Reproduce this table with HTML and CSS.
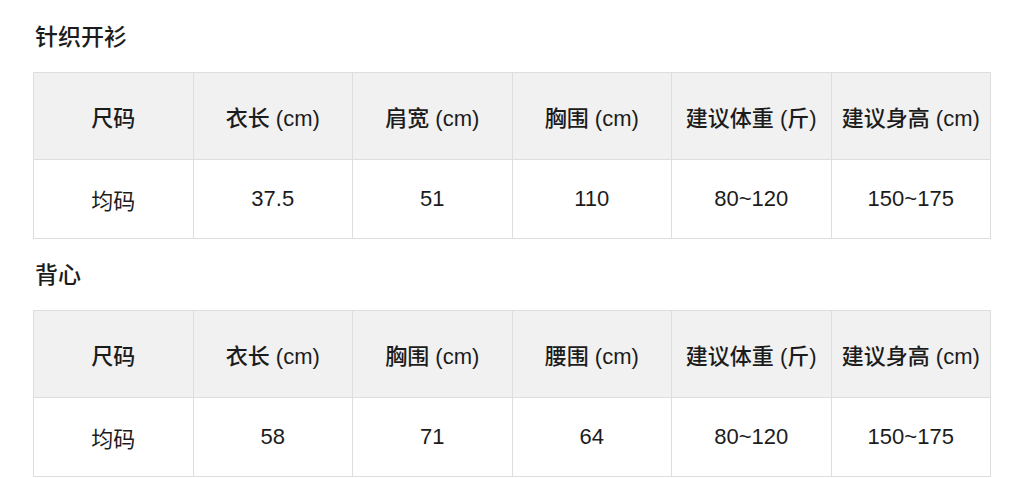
FILE: index.html
```html
<!DOCTYPE html>
<html lang="zh-CN">
<head>
<meta charset="utf-8">
<link rel="stylesheet" href="styles.css">
</head>
<body>
<div class="page">
  <section class="block">
    <h2 class="title">针织开衫</h2>
    <table class="size-table">
      <thead>
        <tr><th>尺码</th><th>衣长 (cm)</th><th>肩宽 (cm)</th><th>胸围 (cm)</th><th>建议体重 (斤)</th><th>建议身高 (cm)</th></tr>
      </thead>
      <tbody>
        <tr><td>均码</td><td>37.5</td><td>51</td><td>110</td><td>80~120</td><td>150~175</td></tr>
      </tbody>
    </table>
  </section>
  <section class="block">
    <h2 class="title">背心</h2>
    <table class="size-table">
      <thead>
        <tr><th>尺码</th><th>衣长 (cm)</th><th>胸围 (cm)</th><th>腰围 (cm)</th><th>建议体重 (斤)</th><th>建议身高 (cm)</th></tr>
      </thead>
      <tbody>
        <tr><td>均码</td><td>58</td><td>71</td><td>64</td><td>80~120</td><td>150~175</td></tr>
      </tbody>
    </table>
  </section>
</div>
</body>
</html>
```

FILE: styles.css
```css
html, body {
  margin: 0;
  padding: 0;
  background: #ffffff;
}
body {
  font-family: "Liberation Sans", "Noto Sans CJK SC", sans-serif;
  color: #1c1c1c;
}
.page {
  padding: 22px 0 0 33px;
  width: 958px;
}
.block + .block {
  margin-top: 21px;
}
.title {
  margin: 0 0 20px 2px;
  font-size: 23px;
  line-height: 30px;
  font-weight: 500;
}
.size-table {
  width: 958px;
  table-layout: fixed;
  border-collapse: collapse;
}
.size-table th,
.size-table td {
  border: 1px solid #dedede;
  text-align: center;
  font-size: 22px;
  padding: 0;
  white-space: nowrap;
}
.size-table th {
  background: #f1f1f1;
  font-weight: 500;
  height: 86px;
}
.size-table td {
  height: 78px;
  font-weight: 400;
}
```
